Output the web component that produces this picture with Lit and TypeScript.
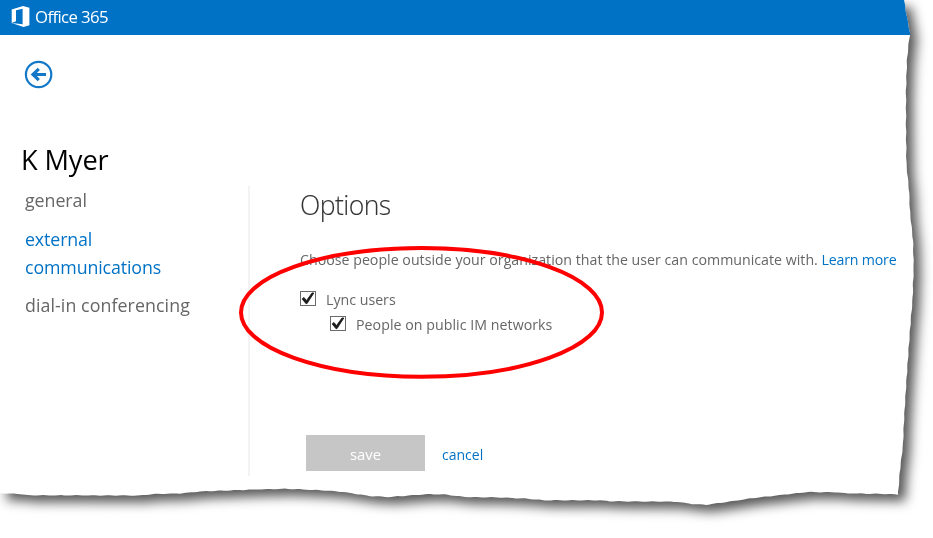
import { LitElement, html, css, svg } from "lit";
import { customElement, property } from "lit/decorators.js";
import { classMap } from "lit/directives/class-map.js";
import { styleMap } from "lit/directives/style-map.js";

type Point = [number, number];

const RIGHT_EDGE: Point[] = [
  [904, 0], [906, 12], [910, 33], [908.5, 45], [907, 60], [906, 90], [906, 130], [906.5, 165],
  [909, 190], [910, 212], [913, 240], [913.7, 268], [912.5, 300], [910, 330], [906.5, 380],
  [904, 420], [903, 445], [900, 470], [898, 494.5],
];
const BOTTOM_EDGE: Point[] = [
  [898, 494.5], [885, 494], [845, 493.3], [838, 492.3], [808, 492], [785, 494.5], [750, 498.5],
  [720, 503], [706, 504.8], [692, 504], [677, 501.7], [640, 501.5], [610, 501.3], [600, 500.3],
  [545, 500.3], [525, 498.5], [500, 497.5], [465, 497], [445, 494.5], [428, 494.2], [410, 495.5],
  [388, 497], [370, 496], [343, 492], [325, 490.5], [300, 489.3], [285, 488.8], [255, 489.5],
  [200, 491.5], [180, 493.5], [155, 494], [140, 495.5], [28, 495.3], [20, 494], [0, 493.3],
];

/* Subdivides an edge and adds a slight ripple along one axis, like torn paper. */
function tear(points: Point[], axis: 0 | 1): Point[] {
  const out: Point[] = [];
  points.slice(1).forEach((end, i) => {
    const start = points[i];
    const steps = Math.max(1, Math.round(Math.abs(end[1 - axis] - start[1 - axis]) / 3));
    for (let s = 0; s < steps; s++) {
      const t = s / steps;
      const p: Point = [start[0] + (end[0] - start[0]) * t, start[1] + (end[1] - start[1]) * t];
      p[axis] += 0.25 * Math.sin((p[1 - axis] * Math.PI * 2) / 16);
      out.push(p);
    }
  });
  return out;
}

const outline = [[0, 0] as Point, ...tear(RIGHT_EDGE, 0), ...tear(BOTTOM_EDGE, 1), [0, 493.3] as Point];
const paperShape = `polygon(${outline.map(([x, y]) => `${x.toFixed(1)}px ${y.toFixed(1)}px`).join(",")})`;

@customElement("check-option")
export class CheckOption extends LitElement {
  @property() label = "";
  @property({ type: Boolean }) checked = false;

  static styles = css`
    :host { display: flex; align-items: flex-start; height: 20px; }
    .box { box-sizing: border-box; width: 16px; height: 15px; margin-top: 2px; border: 1px solid #6a6a6a; background: #fff; }
    .box svg { display: block; }
    .label { margin-left: 10px; line-height: 22px; white-space: nowrap; }
  `;

  render() {
    return html`
      <span class="box">${this.checked
        ? html`<svg width="14" height="13" viewBox="0 0 14 13"><path d="M1.2 6.9 3 5.5 5.4 8.7 11 1h1.8L6 11.6H4.9Z" fill="#1c1c1c" stroke="#1c1c1c" stroke-width=".9" /></svg>`
        : null}</span>
      <span class="label">${this.label}</span>
    `;
  }
}

@customElement("app-root")
export class AppRoot extends LitElement {
  static styles = css`
    :host { display: block; position: relative; width: 933px; height: 538px; overflow: hidden; background: #fff;
      font-family: "Open Sans", "Noto Sans", sans-serif; font-size: 14.2px; color: #666; }
    .shadow { filter: drop-shadow(7px 7px 6px rgba(0, 0, 0, 0.66)); }
    .paper { width: 933px; height: 538px; background: #fff; }
    .bar { display: flex; align-items: flex-start; height: 35px; background: #0072c6; color: #fff; }
    .logo { margin: 5px 0 0 11px; }
    .brand { margin-left: 4px; font-size: 16.8px; line-height: 34px; letter-spacing: -0.62px; }
    .back { display: block; margin: 25px 0 0 24px; }
    .person { margin: 52px 0 0 21px; font-size: 27.2px; font-weight: 400; line-height: 37px; height: 36px; letter-spacing: -0.1px; color: #000; }
    .columns { display: flex; margin-top: 9px; height: 290px; }
    .nav { display: flex; flex-direction: column; gap: 10.5px; box-sizing: border-box; width: 250px; padding-left: 25px;
      border-right: 2px solid #f3f3f3; font-size: 17.8px; line-height: 28px; }
    .item { max-width: 180px; letter-spacing: -0.05px; }
    .wide { letter-spacing: 0.08px; }
    .active { max-width: 150px; color: #0072c6; letter-spacing: -0.12px; }
    .content { display: flex; flex-direction: column; padding-left: 50px; }
    .title { margin: 1px 0 0 0; font-size: 26.6px; font-weight: 300; line-height: 36px; letter-spacing: -0.58px; color: #333; -webkit-text-stroke: 0.1px #333; }
    .intro { margin: 27px 0 0; line-height: 20px; white-space: nowrap; letter-spacing: 0.01px; }
    .link { color: #0072c6; }
    .more { letter-spacing: -0.2px; }
    .options { display: flex; flex-direction: column; gap: 5px; margin-top: 19px; }
    .nested { margin-left: 30px; letter-spacing: 0.04px; }
    .actions { display: flex; align-items: center; gap: 17px; margin: 101px 0 0 6px; }
    .save { width: 119px; height: 36px; padding: 2px 0 0; border: 0; background: #c6c6c6; color: #fff; font: inherit; font-size: 14.9px; }
    .cancel { padding-top: 3px; font-size: 14px; }
    .ring { position: absolute; left: 236px; top: 243px; }
  `;

  render() {
    const nav = [
      { label: "general" },
      { label: "external communications", active: true },
      { label: "dial-in conferencing", wide: true },
    ];
    return html`
      <div class="shadow">
        <div class="paper" style=${styleMap({ clipPath: paperShape })}>
          <header class="bar">
            <svg class="logo" width="20" height="23" viewBox="0 0 20 23">
              <path fill="#fff" d="M.7 4.4 12 .9 18.4 2.7V20.2L12.6 22 .7 17.9 11.6 19.2V3.7L5 5.3V16.2L.7 17.9Z" />
            </svg>
            <span class="brand">Office 365</span>
          </header>
          <svg class="back" width="29" height="29" viewBox="0 0 29 29" fill="none" stroke="#1478c8" stroke-width="2.2">
            ${svg`<circle cx="14.6" cy="14.5" r="12.7" /><path stroke-width="3" d="M9 14.5H22" /><path stroke-width="3.2" d="M14.8 8.9 9 14.5 14.8 20.1" />`}
          </svg>
          <h1 class="person">K Myer</h1>
          <div class="columns">
            <nav class="nav">
              ${nav.map((n) => html`<a class=${classMap({ item: true, active: !!n.active, wide: !!n.wide })}>${n.label}</a>`)}
            </nav>
            <main class="content">
              <h2 class="title">Options</h2>
              <p class="intro">Choose people outside your organization that the user can communicate with. <a class="link more">Learn more</a></p>
              <div class="options">
                <check-option label="Lync users" checked></check-option>
                <check-option class="nested" label="People on public IM networks" checked></check-option>
              </div>
              <div class="actions">
                <button class="save">save</button>
                <a class="link cancel">cancel</a>
              </div>
            </main>
          </div>
        </div>
      </div>
      <svg class="ring" width="371" height="139" viewBox="236 243 371 139">
        <ellipse cx="421.5" cy="312.4" rx="180.5" ry="64.4" fill="none" stroke="#f00" stroke-width="4" />
      </svg>
    `;
  }
}
